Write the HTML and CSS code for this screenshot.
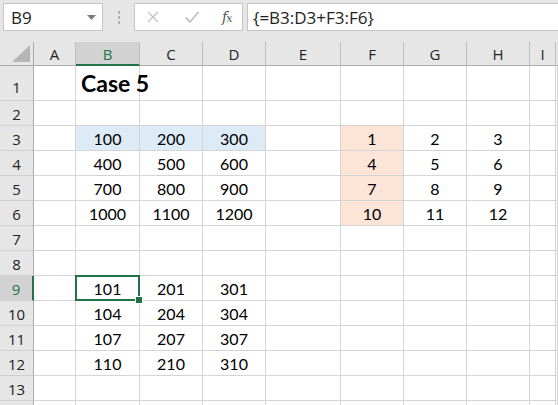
FILE: index.html
```html
<!DOCTYPE html>
<html>
<head>
<meta charset="utf-8">
<link rel="stylesheet" href="styles.css">
</head>
<body>
<div class="toolbar">
  <div class="namebox"><span class="nb-text">B9</span>
    <svg class="nb-arrow" width="9" height="5" viewBox="0 0 9 5"><polygon points="0,0 9,0 4.5,5" fill="#7a7a7a"/></svg>
  </div>
  <div class="grip"><i></i><i></i><i></i></div>
  <div class="fx-box">
    <svg class="ico" width="14" height="14" viewBox="0 0 14 14"><path d="M2 2 L12 12 M12 2 L2 12" stroke="#c2c2c2" stroke-width="1.4" fill="none"/></svg>
    <svg class="ico" width="16" height="14" viewBox="0 0 16 14"><path d="M1.5 7.5 L6 12 L14.5 2" stroke="#c2c2c2" stroke-width="1.8" fill="none"/></svg>
    <span class="fx"><i>f</i><i class="x">x</i></span>
  </div>
  <div class="formula">{=B3:D3+F3:F6}</div>
</div>
<div class="sheet">
  <div class="corner"><svg width="18" height="17" viewBox="0 0 18 17"><polygon points="18,0 18,17 0,17" fill="#b5b5b5"/></svg></div>
  <div class="ch">A</div><div class="ch sel">B</div><div class="ch">C</div><div class="ch">D</div><div class="ch">E</div><div class="ch">F</div><div class="ch">G</div><div class="ch">H</div><div class="ch">I</div><div class="ch last"></div>

  <div class="rh tall">1</div><div class="c tall"></div><div class="c tall title">Case 5</div><div class="c tall"></div><div class="c tall"></div><div class="c tall"></div><div class="c tall"></div><div class="c tall"></div><div class="c tall"></div><div class="c tall"></div><div class="c tall"></div>

  <div class="rh">2</div><div class="c"></div><div class="c"></div><div class="c"></div><div class="c"></div><div class="c"></div><div class="c"></div><div class="c"></div><div class="c"></div><div class="c"></div><div class="c"></div>

  <div class="rh">3</div><div class="c"></div><div class="c blue">100</div><div class="c blue">200</div><div class="c blue">300</div><div class="c"></div><div class="c orange">1</div><div class="c">2</div><div class="c">3</div><div class="c"></div><div class="c"></div>

  <div class="rh">4</div><div class="c"></div><div class="c">400</div><div class="c">500</div><div class="c">600</div><div class="c"></div><div class="c orange">4</div><div class="c">5</div><div class="c">6</div><div class="c"></div><div class="c"></div>

  <div class="rh">5</div><div class="c"></div><div class="c">700</div><div class="c">800</div><div class="c">900</div><div class="c"></div><div class="c orange">7</div><div class="c">8</div><div class="c">9</div><div class="c"></div><div class="c"></div>

  <div class="rh">6</div><div class="c"></div><div class="c">1000</div><div class="c">1100</div><div class="c">1200</div><div class="c"></div><div class="c orange">10</div><div class="c">11</div><div class="c">12</div><div class="c"></div><div class="c"></div>

  <div class="rh">7</div><div class="c"></div><div class="c"></div><div class="c"></div><div class="c"></div><div class="c"></div><div class="c"></div><div class="c"></div><div class="c"></div><div class="c"></div><div class="c"></div>

  <div class="rh">8</div><div class="c"></div><div class="c"></div><div class="c"></div><div class="c"></div><div class="c"></div><div class="c"></div><div class="c"></div><div class="c"></div><div class="c"></div><div class="c"></div>

  <div class="rh rsel">9</div><div class="c"></div><div class="c active">101</div><div class="c">201</div><div class="c">301</div><div class="c"></div><div class="c"></div><div class="c"></div><div class="c"></div><div class="c"></div><div class="c"></div>

  <div class="rh">10</div><div class="c"></div><div class="c">104</div><div class="c">204</div><div class="c">304</div><div class="c"></div><div class="c"></div><div class="c"></div><div class="c"></div><div class="c"></div><div class="c"></div>

  <div class="rh">11</div><div class="c"></div><div class="c">107</div><div class="c">207</div><div class="c">307</div><div class="c"></div><div class="c"></div><div class="c"></div><div class="c"></div><div class="c"></div><div class="c"></div>

  <div class="rh">12</div><div class="c"></div><div class="c">110</div><div class="c">210</div><div class="c">310</div><div class="c"></div><div class="c"></div><div class="c"></div><div class="c"></div><div class="c"></div><div class="c"></div>

  <div class="rh">13</div><div class="c"></div><div class="c"></div><div class="c"></div><div class="c"></div><div class="c"></div><div class="c"></div><div class="c"></div><div class="c"></div><div class="c"></div><div class="c"></div>

  <div class="rh"></div><div class="c"></div><div class="c"></div><div class="c"></div><div class="c"></div><div class="c"></div><div class="c"></div><div class="c"></div><div class="c"></div><div class="c"></div><div class="c"></div>
</div>
</body>
</html>
```

FILE: styles.css
```css
* { box-sizing: border-box; }
html, body { margin: 0; padding: 0; }
body {
  width: 558px;
  height: 405px;
  overflow: hidden;
  background: #e6e6e6;
  font-family: "Open Sans", "Liberation Sans", sans-serif;
}
.toolbar {
  height: 42px;
  display: flex;
  align-items: flex-start;
  padding-top: 3px;
  padding-left: 3px;
}
.namebox {
  width: 100px;
  height: 28px;
  background: #fff;
  border: 1px solid #c6c6c6;
  display: flex;
  align-items: center;
  justify-content: space-between;
  padding: 0 6px 0 7px;
  font-size: 17px;
  color: #222;
}
.nb-text { line-height: 1; }
.grip {
  width: 31px;
  height: 28px;
  display: flex;
  flex-direction: column;
  align-items: center;
  justify-content: center;
  gap: 2px;
}
.grip i {
  width: 2px;
  height: 3px;
  background: #b0b0b0;
  display: block;
}
.fx-box {
  width: 109px;
  height: 28px;
  background: #fff;
  border: 1px solid #c6c6c6;
  display: flex;
  align-items: center;
  padding-left: 11px;
  gap: 0;
}
.fx-box .ico:nth-child(1) { margin-right: 24px; }
.fx-box .ico:nth-child(2) { margin-right: 22px; }
.fx {
  font-family: "DejaVu Serif", "Liberation Serif", serif;
  font-size: 14px;
  color: #555;
  letter-spacing: -1px;
}
.fx .x { font-size: 11px; }
.formula {
  margin-left: 4px;
  flex: 1;
  height: 28px;
  background: #fff;
  border: 1px solid #c6c6c6;
  border-right: none;
  font-size: 17px;
  color: #222;
  padding-left: 5px;
  display: flex;
  align-items: center;
}
.sheet {
  display: grid;
  grid-template-columns: 34px 42px 64px 63px 63px 75px 63px 63px 63px 26px 1fr;
  grid-template-rows: 24px 35px repeat(13, 25px);
  background: #fff;
}
.corner {
  background: #e6e6e6;
  border-right: 1px solid #ababab;
  border-bottom: 1px solid #ababab;
  display: flex;
  align-items: flex-end;
  justify-content: flex-end;
  padding: 0 3px 3px 0;
}
.corner svg { display: block; }
.ch {
  background: #e6e6e6;
  border-right: 1px solid #bdbdbd;
  border-bottom: 1px solid #ababab;
  font-size: 15px;
  color: #222;
  display: flex;
  align-items: center;
  justify-content: center;
  padding-top: 1px;
}
.ch.last { border-right: none; }
.ch.sel {
  background: #d2d2d2;
  color: #217346;
  border-bottom: 2px solid #217346;
}
.rh {
  background: #e6e6e6;
  border-right: 1px solid #ababab;
  border-bottom: 1px solid #cfcfcf;
  font-size: 15px;
  color: #222;
  display: flex;
  align-items: center;
  justify-content: center;
  padding-top: 1px;
}
.rh.tall { align-items: flex-end; padding-bottom: 3px; }
.rh.rsel {
  background: #d2d2d2;
  color: #217346;
  border-right: 2px solid #217346;
}
.c {
  border-right: 1px solid #d4d4d4;
  border-bottom: 1px solid #d4d4d4;
  font-family: "Lato", "Liberation Sans", sans-serif;
  font-size: 16px;
  color: #000;
  display: flex;
  align-items: flex-end;
  justify-content: center;
  padding-bottom: 3px;
  line-height: 1;
}
.c.tall { padding-bottom: 5px; }
.c.title {
  justify-content: flex-start;
  padding-left: 5px;
  font-weight: bold;
  font-size: 23px;
  white-space: nowrap;
  overflow: visible;
}
.c.blue { background: #ddebf7; }
.c.orange { background: #fce4d6; }
.c.active { position: relative; }
.c.active::after {
  content: "";
  position: absolute;
  left: -1px;
  top: -1px;
  right: -1px;
  bottom: -1px;
  border: 2px solid #217346;
}
.c.active::before {
  content: "";
  position: absolute;
  right: -4px;
  bottom: -4px;
  width: 6px;
  height: 6px;
  background: #217346;
  border: 1px solid #fff;
  z-index: 2;
}
```
